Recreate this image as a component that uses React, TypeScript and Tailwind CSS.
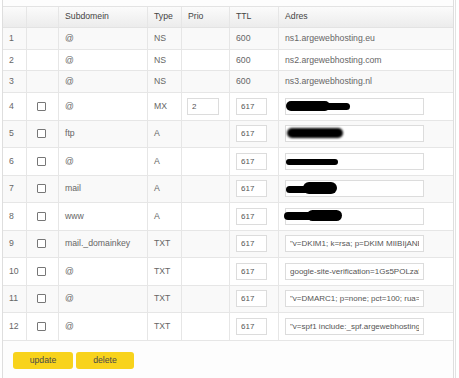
import React from 'react';

interface DnsRecord {
  id: number;
  sub: string;
  type: string;
  prio?: string;
  ttl: string;
  adres: string;
  editable: boolean;
  blob?: number;
}

const records: DnsRecord[] = [
  { id: 1, sub: '@', type: 'NS', ttl: '600', adres: 'ns1.argewebhosting.eu', editable: false },
  { id: 2, sub: '@', type: 'NS', ttl: '600', adres: 'ns2.argewebhosting.com', editable: false },
  { id: 3, sub: '@', type: 'NS', ttl: '600', adres: 'ns3.argewebhosting.nl', editable: false },
  { id: 4, sub: '@', type: 'MX', prio: '2', ttl: '617', adres: '', editable: true, blob: 0 },
  { id: 5, sub: 'ftp', type: 'A', ttl: '617', adres: '', editable: true, blob: 1 },
  { id: 6, sub: '@', type: 'A', ttl: '617', adres: '', editable: true, blob: 2 },
  { id: 7, sub: 'mail', type: 'A', ttl: '617', adres: '', editable: true, blob: 3 },
  { id: 8, sub: 'www', type: 'A', ttl: '617', adres: '', editable: true, blob: 4 },
  { id: 9, sub: 'mail._domainkey', type: 'TXT', ttl: '617', adres: '"v=DKIM1; k=rsa; p=DKIM MIIBIjANBgkqhkiG9w0BAQEFAAOCAQ8AMIIBCgKCAQEA', editable: true },
  { id: 10, sub: '@', type: 'TXT', ttl: '617', adres: 'google-site-verification=1Gs5POLza5XkQ2vT8', editable: true },
  { id: 11, sub: '@', type: 'TXT', ttl: '617', adres: '"v=DMARC1; p=none; pct=100; rua=mailto:dmarc@', editable: true },
  { id: 12, sub: '@', type: 'TXT', ttl: '617', adres: '"v=spf1 include:_spf.argewebhosting.nl ~all"', editable: true },
];

const grid = 'grid grid-cols-[24px_32px_89px_34px_48px_49px_173px]';
const cell = 'flex items-center px-[6px] border-r border-[#e6e6e6] overflow-hidden whitespace-nowrap';
const field =
  'h-[17px] border border-[#dcdcdc] bg-white px-[4px] text-[8px] text-[#555] outline-none';

// scribbled-out addresses
function Blob({ kind }: { kind: number }) {
  if (kind === 0)
    return (
      <>
        <span className="absolute left-[1px] top-[3px] h-[10px] w-[44px] rounded-full bg-black" />
        <span className="absolute left-[30px] top-[5px] h-[7px] w-[35px] rounded-full bg-black" />
      </>
    );
  if (kind === 1)
    return (
      <span className="absolute left-[2px] top-[3px] h-[10px] w-[56px] rounded-full bg-black blur-[1px]" />
    );
  if (kind === 2)
    return <span className="absolute left-[1px] top-[6px] h-[6px] w-[52px] rounded-full bg-black" />;
  if (kind === 3)
    return (
      <>
        <span className="absolute left-[1px] top-[6px] h-[7px] w-[30px] rounded-full bg-black" />
        <span className="absolute left-[18px] top-[2px] h-[12px] w-[34px] rounded-full bg-black" />
      </>
    );
  return (
    <>
      <span className="absolute left-[-1px] top-[4px] h-[8px] w-[30px] rounded-full bg-black" />
      <span className="absolute left-[22px] top-[2px] h-[11px] w-[35px] rounded-full bg-black" />
    </>
  );
}

export default function App() {
  return (
    <div
      className="h-[378px] w-[456px] bg-white border-r border-[#e3e3e3] text-[8.7px] text-[#666]"
      style={{ fontFamily: '"Liberation Sans", Arial, sans-serif' }}
    >
      <div className="ml-[2px] h-full w-[452px] border-l border-r border-[#dedede] bg-[#fdfdfd] pt-[6px]">
        {/* Header */}
        <div
          className={`${grid} h-[22px] border-t border-b border-[#e3e3e3] bg-gradient-to-b from-[#fbfbfb] to-[#ececec] text-[#444]`}
        >
          <div className={cell} />
          <div className={cell} />
          <div className={cell}>Subdomein</div>
          <div className={cell}>Type</div>
          <div className={cell}>Prio</div>
          <div className={cell}>TTL</div>
          <div className={`${cell} border-r-0`}>Adres</div>
        </div>

        {records.map((r, i) => (
          <div
            key={r.id}
            className={`${grid} border-b border-[#e6e6e6] ${r.editable ? 'h-[27.5px]' : 'h-[21.7px]'} ${
              i % 2 === 0 ? 'bg-[#f9f9f9]' : 'bg-white'
            }`}
          >
            <div className={cell}>{r.id}</div>
            <div className={`${cell} pl-[10px]`}>
              {r.editable && (
                <span className="block h-[9px] w-[9px] rounded-[1px] border border-[#777] bg-white" />
              )}
            </div>
            <div className={cell}>{r.sub}</div>
            <div className={cell}>{r.type}</div>
            <div className={`${cell} pl-[5px]`}>
              {r.prio && <input readOnly value={r.prio} className={`${field} w-[32px] text-[8.5px]`} />}
            </div>
            <div className={cell}>
              {r.editable ? (
                <input readOnly value={r.ttl} className={`${field} w-[31px] text-[8.5px]`} />
              ) : (
                r.ttl
              )}
            </div>
            <div className={`${cell} border-r-0`}>
              {r.editable ? (
                <div className="relative">
                  <input readOnly value={r.adres} className={`${field} w-[139px]`} />
                  {r.blob !== undefined && <Blob kind={r.blob} />}
                </div>
              ) : (
                r.adres
              )}
            </div>
          </div>
        ))}

        <div className="flex gap-[3px] pl-[10px] pt-[11px]">
          <button className="h-[17px] w-[60px] rounded-[3px] bg-[#f8d31c] text-[8.7px] text-[#4a4a4a]">
            update
          </button>
          <button className="h-[17px] w-[58px] rounded-[3px] bg-[#f8d31c] text-[8.7px] text-[#4a4a4a]">
            delete
          </button>
        </div>
      </div>
    </div>
  );
}
